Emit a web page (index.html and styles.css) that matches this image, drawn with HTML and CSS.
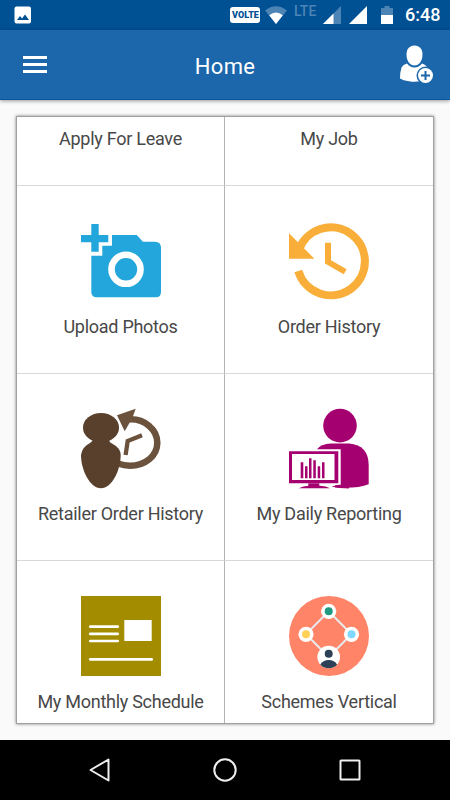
FILE: index.html
```html
<!DOCTYPE html>
<html lang="en">
<head>
    <meta charset="UTF-8">
    <meta name="viewport" content="width=device-width, initial-scale=1">
    <title>Home</title>
    <link rel="stylesheet" href="styles.css">
</head>
<body>
    <!-- status bar -->
    <div class="statusbar">
        <svg class="st-photo" width="18" height="18" viewBox="0 0 18 18">
            <rect x="0.5" y="0.5" width="16.500" height="17" rx="2" fill="#fff"/>
            <path d="M3 14l3-4 2 2.4 3-4 4 5.6z" fill="#005094"/>
        </svg>
        <span class="volte">VOLTE</span>
        <svg class="st-wifi" width="22" height="18" viewBox="0 0 22 18">
            <path d="M0 4.5Q11-4 22 4.5L11 18z" fill="#4c85b5"/>
            <path d="M4.2 9.3Q11 3.8 17.800 9.300L11 18z" fill="#fff"/>
        </svg>
        <span class="lte">LTE</span>
        <svg class="st-sig1" width="18" height="18" viewBox="0 0 18 18">
            <path d="M18 0v18H0z" fill="#4c85b5"/>
            <path d="M10.500 7.500V18H0z" fill="#fff"/>
        </svg>
        <svg class="st-sig2" width="18" height="18" viewBox="0 0 18 18">
            <path d="M18 0v18H0z" fill="#fff"/>
        </svg>
        <svg class="st-batt" width="12" height="18" viewBox="0 0 12 18">
            <path d="M3.500 0h5v2H12v7H0V2h3.500z" fill="#4c85b5"/>
            <path d="M0 9h12v9H0z" fill="#fff"/>
        </svg>
        <span class="time">6:48</span>
    </div>

    <!-- toolbar -->
    <div class="toolbar">
        <div class="menu"><i></i><i></i><i></i></div>
        <div class="title">Home</div>
        <svg class="add-user" width="34" height="39" viewBox="0 0 34 39">
            <path d="M15.500 0.500C20.500 0.500 23.500 4 23.500 9.500C23.500 16 20 20.500 15.500 20.500S7.500 16 7.500 9.500C7.500 4 10.500 0.500 15.500 0.500z" fill="#fff"/>
            <path d="M8 18.500Q11 22.500 15.500 22.500T23 18.500Q28 20 29 24L22 36Q16 37.500 10 36.300Q4 35.600 1 33.500Q1 27 2.500 22.500Q4 19.500 8 18.500z" fill="#fff"/>
            <circle cx="26.500" cy="30.500" r="9" fill="#1c67ac"/>
            <circle cx="26.500" cy="30.500" r="7.500" fill="#fff"/>
            <path d="M26.500 26v9M22 30.500h9" stroke="#1c67ac" stroke-width="2"/>
        </svg>
    </div>

    <!-- menu grid -->
    <div class="content">
        <div class="grid">
            <div class="cell">
                <div class="label">Apply For Leave</div>
            </div>
            <div class="cell">
                <div class="label">My Job</div>
            </div>

            <div class="cell">
                <svg class="icon" viewBox="0 0 80 80" fill="#23a6dc">
                    <path d="M10.300 3h7.400v11h9.600v7.300h-9.600v9.400h-7.400v-9.400H0V14h10.300z"/>
                    <path d="M31 14h24.700l6.300 6.700h12q6 0 6 6V71q0 5.300-5.300 5.300H16q-5.700 0-5.700-5.300V34.700h11v-10H31z"/>
                    <circle cx="45" cy="48.300" r="14.500" fill="none" stroke="#fff" stroke-width="6.600"/>
                </svg>
                <div class="label">Upload Photos</div>
            </div>
            <div class="cell">
                <svg class="icon" viewBox="0 0 80 80" fill="#f8ae38">
                    <path d="M9.300 50A34 34 0 1 0 9.500 30" fill="none" stroke="#f8ae38" stroke-width="8"/>
                    <path d="M0 12.300L25.400 37.700H0z"/>
                    <path d="M36 21.700h6v17.600l15.700 9-3 5L36 42.500z"/>
                </svg>
                <div class="label">Order History</div>
            </div>

            <div class="cell">
                <svg class="icon" viewBox="0 -1 80 80" fill="#59402d">
                    <path d="M48 10.400C64 9.500 76.300 21 76.300 33.700C76.300 47 64 56.700 49 56.700Q43 56.700 37 54.500" fill="none" stroke="#6b523c" stroke-width="6.500"/>
                    <path d="M36 6.300L54.700-.3L51.500 8.500L43.700 22.300z" fill="#6b523c"/>
                    <path d="M61 26.300L46.700 32L44.600 46" fill="none" stroke="#6b523c" stroke-width="4.300"/>
                    <ellipse cx="20" cy="18.700" rx="18" ry="14.700"/>
                    <path d="M12 30H28Q28 33 31 34.500Q39.700 39 39.700 46C39.700 61 31 79.300 20 79.300S0 61 0 46Q1 38 9 34Q12 32.500 12 30z"/>
                </svg>
                <div class="label">Retailer Order History</div>
            </div>
            <div class="cell">
                <svg class="icon" viewBox="0 -1.3 80 80" fill="#a4006f">
                    <circle cx="51" cy="16.300" r="16.800"/>
                    <path d="M27 41Q32 34.300 42 34.300H60Q79.700 36 79.700 56V75Q67 80 44 78L27 70z"/>
                    <path d="M-2 40h53.700v36H-2z" fill="#fff"/>
                    <path d="M28 75h18v5H28z" fill="#fff"/>
                    <path d="M43 77.200L50 75.500L60 76V79.300Q50 79 43 77.500z"/>
                    <path d="M0 42h49.300v32H0z"/>
                    <path d="M3 44.700h42.500v26H3z" fill="#fff"/>
                    <path d="M11.700 53h2.600v16h-2.600zM16 57h2.500v12H16zM20 49h2.500v20H20zM24.300 51h2.500v18h-2.500zM28.700 57h2.500v12h-2.500zM33 53h2.500v16H33z"/>
                    <path d="M19.300 74h11v3h-11z"/>
                    <path d="M9.700 79Q14 76.500 20 76.500H31Q37 76.500 41 79z"/>
                </svg>
                <div class="label">My Daily Reporting</div>
            </div>

            <div class="cell">
                <svg class="icon" viewBox="0 0 80 80">
                    <path d="M0 0h80v80H0z" fill="#a38c00"/>
                    <path d="M43.300 24h27.400v21H43.300z" fill="#fff"/>
                    <path d="M9.300 30.700h27.400M9.300 37.900h27.400M9.300 45h27.400M9.300 63.400h61.400" stroke="#fff" stroke-width="2.700" stroke-linecap="round"/>
                </svg>
                <div class="label">My Monthly Schedule</div>
            </div>
            <div class="cell">
                <svg class="icon" viewBox="0 0 80 80">
                    <circle cx="40" cy="40" r="40" fill="#ff8468"/>
                    <path d="M39.700 15.300L62.500 38.300L39.700 61L17 38.300z" fill="none" stroke="#e9e9ee" stroke-width="2"/>
                    <g fill="#fff">
                        <circle cx="39.700" cy="15.300" r="7.600"/>
                        <circle cx="17" cy="38.300" r="7.600"/>
                        <circle cx="62.500" cy="38.300" r="7.600"/>
                        <circle cx="39.700" cy="61" r="11.300"/>
                    </g>
                    <circle cx="39.700" cy="15.300" r="4" fill="#1f9a80"/>
                    <circle cx="17" cy="38.300" r="4" fill="#ffd053"/>
                    <circle cx="62.500" cy="38.300" r="4" fill="#80d7ff"/>
                    <circle cx="39.700" cy="57.700" r="4" fill="#2c4156"/>
                    <path d="M31.300 68.500Q34 64 39.700 64T48.100 68.500Q45 72.300 39.700 72.300T31.300 68.500z" fill="#2c4156"/>
                </svg>
                <div class="label">Schemes Vertical</div>
            </div>
        </div>
    </div>

    <!-- android navigation -->
    <div class="navbar">
        <svg width="24" height="24" viewBox="0 0 24 24">
            <path d="M20.500 1.500v21L2.500 12z"/>
        </svg>
        <svg width="24" height="24" viewBox="0 0 24 24">
            <circle cx="12" cy="12" r="10.700"/>
        </svg>
        <svg width="24" height="24" viewBox="0 0 24 24">
            <rect x="2.500" y="2.500" width="19" height="19" rx="0.500"/>
        </svg>
    </div>
</body>
</html>
```
FILE: styles.css
```css
* { box-sizing: border-box; }
body {
    margin: 0;
    width: 450px;
    height: 800px;
    display: flex;
    flex-direction: column;
    overflow: hidden;
    background: #fafafa;
    font-family: Roboto, "Liberation Sans", sans-serif;
}
svg { display: block; flex: none; }

/* status bar */
.statusbar {
    height: 30px;
    display: flex;
    align-items: center;
    padding: 0 10px 0 14px;
    background: #005094;
    color: #fff;
}
.volte {
    width: 30px;
    height: 16px;
    margin-left: auto;
    padding-left: 1px;
    border-radius: 3px;
    background: #fff;
    color: #005094;
    font-size: 9px;
    font-weight: 900;
    line-height: 16px;
    text-align: center;
}
.st-wifi { margin-left: 5px; }
.lte {
    width: 23px;
    height: 22px;
    margin-left: 7px;
    color: #4c85b5;
    font-size: 14px;
    font-weight: 500;
    line-height: 14px;
}
.st-sig1 { margin-left: 6px; }
.st-sig2 { margin-left: 8px; }
.st-batt { margin-left: 14px; }
.time {
    width: 35px;
    margin-left: 12px;
    font-size: 18px;
    font-weight: 500;
    line-height: 30px;
    white-space: nowrap;
}

/* toolbar */
.toolbar {
    position: relative;
    z-index: 1;
    height: 70px;
    display: flex;
    align-items: center;
    justify-content: space-between;
    padding: 0 17px 0 23px;
    background: #1c67ac;
    border-bottom: 1px solid #0b559a;
    box-shadow: 0 1px 4px rgba(0,0,0,0.4);
}
.menu {
    width: 28px;
    display: flex;
    flex-direction: column;
    gap: 4px;
}
.menu i {
    width: 24px;
    height: 3px;
    background: #fff;
}
.title {
    margin-top: 3px;
    color: #fff;
    font-size: 22px;
    letter-spacing: 0.3px;
}

/* grid */
.content {
    flex: 1;
    padding: 16px;
}
.grid {
    width: 418px;
    height: 608px;
    display: grid;
    grid-template-columns: 208px 208px;
    grid-template-rows: 69px 188px 187px 188px;
    overflow: hidden;
    background: #fff;
    border: 1px solid #a0a0a0;
    box-shadow: 0 0 3px rgba(0,0,0,0.5);
}
.cell {
    display: flex;
    flex-direction: column;
    align-items: center;
    justify-content: flex-end;
    padding-bottom: 36px;
    border-bottom: 1px solid #d8d8d8;
}
.cell:nth-child(odd) { border-right: 1px solid #b4b4b4; }
.icon {
    width: 80px;
    height: 80px;
    overflow: visible;
}
.label {
    height: 21px;
    margin-top: 15px;
    color: #484848;
    font-size: 18px;
    letter-spacing: -0.27px;
    line-height: 21px;
    white-space: nowrap;
}

/* bottom navigation */
.navbar {
    height: 60px;
    display: flex;
    align-items: center;
    justify-content: space-between;
    padding: 0 88px;
    background: #000;
}
.navbar svg {
    fill: none;
    stroke: #eee;
    stroke-width: 2;
    stroke-linejoin: round;
}
```
